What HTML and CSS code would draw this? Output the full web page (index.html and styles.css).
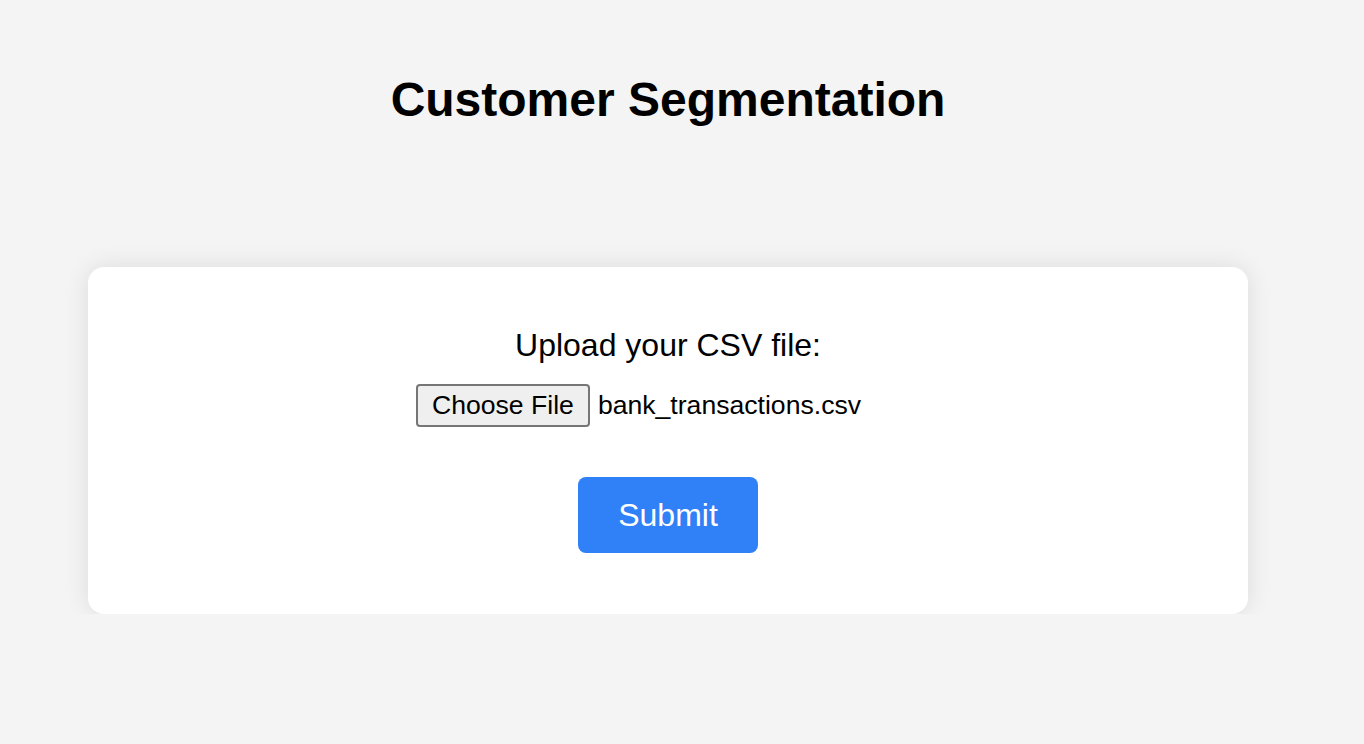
FILE: index.html
```html
<!DOCTYPE html>
<html lang="en">
<head>
<meta charset="utf-8">
<title>Customer Segmentation</title>
<link rel="stylesheet" href="styles.css">
</head>
<body>
  <div class="page">
    <h1 class="title">Customer Segmentation</h1>
    <div class="card">
      <form class="upload-form">
        <label class="upload-label">Upload your CSV file:</label>
        <div class="file-input">
          <span class="file-button">Choose File</span>
          <span class="file-name">bank_transactions.csv</span>
        </div>
        <button type="button" class="submit">Submit</button>
      </form>
    </div>
  </div>
</body>
</html>
```
FILE: styles.css
```css
html, body {
  margin: 0;
  padding: 0;
  background: #f4f4f4;
}
body {
  font-family: "Liberation Sans", Arial, sans-serif;
  color: #000;
}
.page {
  width: 1336px;
  padding-top: 1px;
}
.title {
  margin: 71px 0 0;
  font-size: 48px;
  font-weight: bold;
  text-align: center;
  line-height: 56px;
}
.card {
  margin: 139px 88px 0;
  background: #fff;
  border-radius: 16px;
  box-shadow: 0 0 24px rgba(0, 0, 0, 0.1);
  height: 347px;
  box-sizing: border-box;
  padding-top: 60px;
}
.upload-form {
  display: flex;
  flex-direction: column;
  align-items: center;
}
.upload-label {
  font-size: 32px;
  line-height: 36px;
}
.file-input {
  display: flex;
  align-items: center;
  width: 504px;
  margin-top: 21px;
  font-size: 26.6px;
}
.file-button {
  box-sizing: border-box;
  height: 43px;
  padding: 0 14px;
  display: flex;
  align-items: center;
  background: #efefef;
  border: 2px solid #767676;
  border-radius: 4px;
  margin-right: 8px;
}
.submit {
  margin-top: 50px;
  width: 180px;
  height: 76px;
  background: #3080f7;
  border: none;
  border-radius: 8px;
  color: #fff;
  font-family: "Liberation Sans", Arial, sans-serif;
  font-size: 32px;
}
```
